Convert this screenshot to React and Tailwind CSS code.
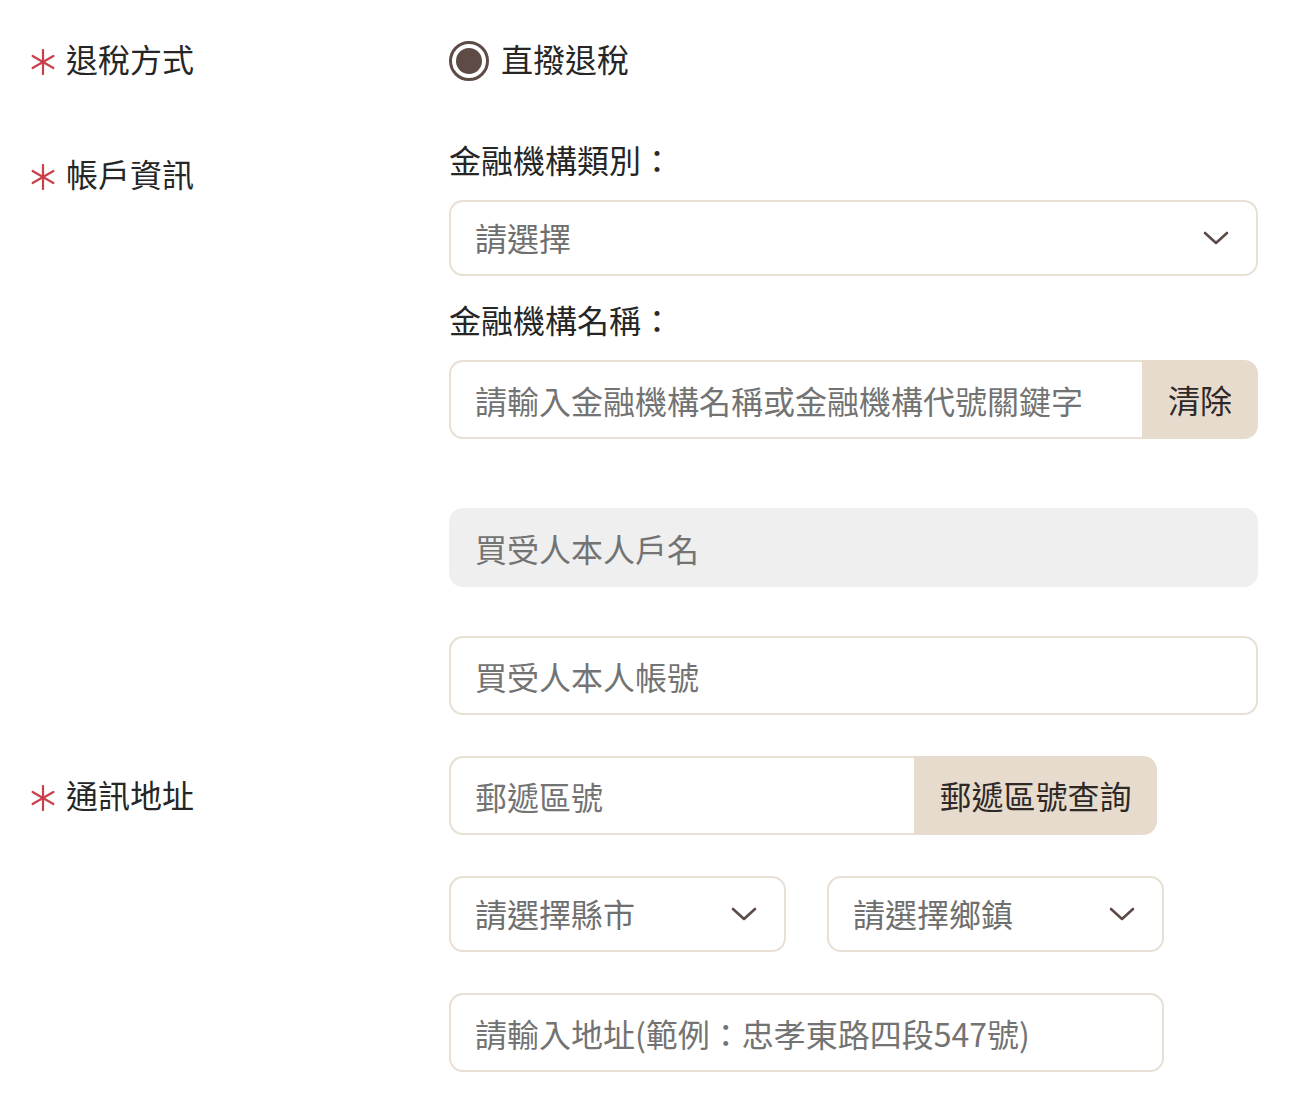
// App.jsx – refund / account info form

import React from 'react';

const FONT = "font-['Noto_Sans_CJK_TC','Noto_Sans_CJK_SC',sans-serif]";

// Thin six-spoke required mark
const RequiredMark = () => (
  <svg width="26" height="26" viewBox="0 0 26 26" className="shrink-0">
    <g stroke="#c9404a" strokeWidth="2.2" strokeLinecap="round">
      <line x1="13" y1="1" x2="13" y2="25" />
      <line x1="2.6" y1="7" x2="23.4" y2="19" />
      <line x1="2.6" y1="19" x2="23.4" y2="7" />
    </g>
  </svg>
);

const Chevron = () => (
  <svg width="26" height="16" viewBox="0 0 26 16" className="shrink-0">
    <path d="M2 3 L13 13 L24 3" fill="none" stroke="#5b4b46" strokeWidth="2.6" strokeLinecap="round" strokeLinejoin="round" />
  </svg>
);

const FieldLabel = ({ children, className = '' }) => (
  <div className={`flex items-center gap-[10px] h-[44px] w-[419px] shrink-0 ${className}`}>
    <span className="pt-[2px]">
      <RequiredMark />
    </span>
    <span className="text-[32px] text-[#262626] leading-none pb-[6px]">{children}</span>
  </div>
);

const SelectBox = ({ placeholder, className = '' }) => (
  <div className={`flex items-center justify-between h-[76px] pl-[24px] pr-[27px] border-2 border-[#e8dfd5] rounded-[14px] bg-white ${className}`}>
    <span className="text-[32px] text-[#6f6f6f] leading-none pb-[2px]">{placeholder}</span>
    <Chevron />
  </div>
);

const TextInput = ({ placeholder, disabled = false, className = '' }) => (
  <input
    type="text"
    disabled={disabled}
    placeholder={placeholder}
    className={`block h-[79px] px-[24px] rounded-[14px] text-[32px] outline-none placeholder:text-[#737373] ${
      disabled ? 'bg-[#efefef] border-2 border-[#efefef]' : 'bg-white border-2 border-[#e8dfd5]'
    } ${className}`}
  />
);

const InputWithButton = ({ placeholder, buttonText, className = '', buttonWidth = 'w-[116px]' }) => (
  <div className={`flex h-[79px] ${className}`}>
    <input
      type="text"
      placeholder={placeholder}
      className="flex-1 min-w-0 h-full pl-[24px] pr-3 border-2 border-r-0 border-[#e8dfd5] rounded-l-[14px] bg-white text-[32px] outline-none placeholder:text-[#737373]"
    />
    <button
      type="button"
      className={`${buttonWidth} h-full shrink-0 rounded-r-[14px] bg-[#e6dbcd] text-[32px] text-[#2e2826] leading-none pb-[2px]`}
    >
      {buttonText}
    </button>
  </div>
);

export default function App() {
  return (
    <div className={`min-h-screen bg-white pt-[39px] pl-[30px] ${FONT}`}>
      {/* Refund method */}
      <div className="flex">
        <FieldLabel>退稅方式</FieldLabel>
        <label className="flex items-center gap-3 h-[44px]">
          <span className="flex items-center justify-center w-[40px] h-[40px] rounded-full border-[3px] border-[#5e4b45]">
            <span className="w-[26px] h-[26px] rounded-full bg-[#5e4b45]" />
          </span>
          <span className="text-[32px] text-[#262626] leading-none pb-[6px]">直撥退稅</span>
        </label>
      </div>

      {/* Account info */}
      <div className="flex mt-[57px]">
        <FieldLabel className="mt-[14px]">帳戶資訊</FieldLabel>
        <div className="w-[809px] flex flex-col">
          <div className="h-[44px] flex items-center text-[32px] text-[#262626] leading-none pb-[6px]">金融機構類別：</div>
          <SelectBox placeholder="請選擇" className="mt-[16px]" />
          <div className="mt-[24px] h-[44px] flex items-center text-[32px] text-[#262626] leading-none pb-[6px]">金融機構名稱：</div>
          <InputWithButton
            className="mt-[16px]"
            placeholder="請輸入金融機構名稱或金融機構代號關鍵字"
            buttonText="清除"
          />
          <TextInput className="mt-[69px] w-full" placeholder="買受人本人戶名" disabled />
          <TextInput className="mt-[49px] w-full" placeholder="買受人本人帳號" />
        </div>
      </div>

      {/* Mailing address */}
      <div className="flex mt-[41px]">
        <FieldLabel className="mt-[19px]">通訊地址</FieldLabel>
        <div className="flex flex-col">
          <InputWithButton
            className="w-[708px]"
            buttonWidth="w-[243px]"
            placeholder="郵遞區號"
            buttonText="郵遞區號查詢"
          />
          <div className="flex gap-[41px] mt-[41px]">
            <SelectBox placeholder="請選擇縣市" className="w-[337px] h-[75px]" />
            <SelectBox placeholder="請選擇鄉鎮" className="w-[337px] h-[75px]" />
          </div>
          <TextInput className="mt-[41px] w-[715px]" placeholder="請輸入地址(範例：忠孝東路四段547號)" />
        </div>
      </div>
    </div>
  );
}
